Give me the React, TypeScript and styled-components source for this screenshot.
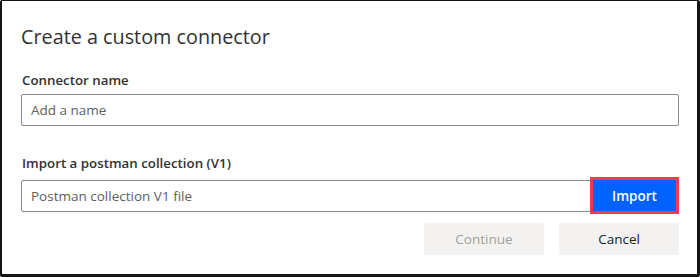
import styled, { createGlobalStyle } from "styled-components";

const GlobalStyle = createGlobalStyle`
  html, body {
    margin: 0;
    padding: 0;
    background: #ffffff;
  }
  * {
    box-sizing: border-box;
  }
`;

export default function App() {
  return (
    <>
      <GlobalStyle />
      <Dialog>
        <Title>Create a custom connector</Title>
        <Field>
          <Label>Connector name</Label>
          <TextInput placeholder="Add a name" />
        </Field>
        <Field $gap={27}>
          <Label>Import a postman collection (V1)</Label>
          <FileRow>
            <TextInput placeholder="Postman collection V1 file" />
            <Highlight>
              <PrimaryButton>Import</PrimaryButton>
            </Highlight>
          </FileRow>
        </Field>
        <Footer>
          <DefaultButton disabled>Continue</DefaultButton>
          <DefaultButton>Cancel</DefaultButton>
        </Footer>
      </Dialog>
    </>
  );
}

const Dialog = styled.div`
  width: 700px;
  height: 277px;
  border-style: solid;
  border-color: #141414;
  border-width: 1px 3px 3px 2px;
  border-radius: 2px;
  background: #ffffff;
  padding: 22px 18px 0 19px;
  display: flex;
  flex-direction: column;
  font-family: "Open Sans", "Noto Sans", sans-serif;
  color: #323130;
`;

const Title = styled.h1`
  margin: 0;
  font-size: 19.8px;
  line-height: 28px;
  font-weight: 400;
  color: #323130;
`;

const Field = styled.div<{ $gap?: number }>`
  display: flex;
  flex-direction: column;
  margin-top: ${(p) => p.$gap ?? 19}px;
`;

const Label = styled.label`
  font-size: 13.3px;
  line-height: 20px;
  font-weight: 600;
  color: #323130;
  padding: 0 1px;
  margin-bottom: 4px;
`;

const TextInput = styled.input`
  width: 100%;
  height: 32px;
  border: 1px solid #8a8886;
  border-radius: 2px;
  padding: 0 9px;
  font-family: inherit;
  font-size: 13.5px;
  color: #323130;
  background: #ffffff;
  outline: none;
  &::placeholder {
    color: #605e5c;
  }
`;

const FileRow = styled.div`
  display: flex;
  align-items: center;
`;

const Highlight = styled.div`
  flex-shrink: 0;
  margin-left: -1px;
  border: 3px solid #f03c46;
  display: flex;
`;

const PrimaryButton = styled.button`
  width: 83px;
  height: 31px;
  border: none;
  border-radius: 0;
  background: #0062ff;
  color: #ffffff;
  font-family: inherit;
  font-size: 13.5px;
  font-weight: 600;
  cursor: pointer;
`;

const Footer = styled.div`
  display: flex;
  justify-content: flex-end;
  gap: 15px;
  margin-top: 9px;
`;

const DefaultButton = styled.button`
  width: 120px;
  height: 32px;
  border: none;
  border-radius: 2px;
  background: #f3f2f1;
  color: #201f1e;
  font-family: inherit;
  font-size: 13.5px;
  font-weight: 400;
  cursor: pointer;
  &:disabled {
    color: #a19f9d;
    cursor: default;
  }
`;
